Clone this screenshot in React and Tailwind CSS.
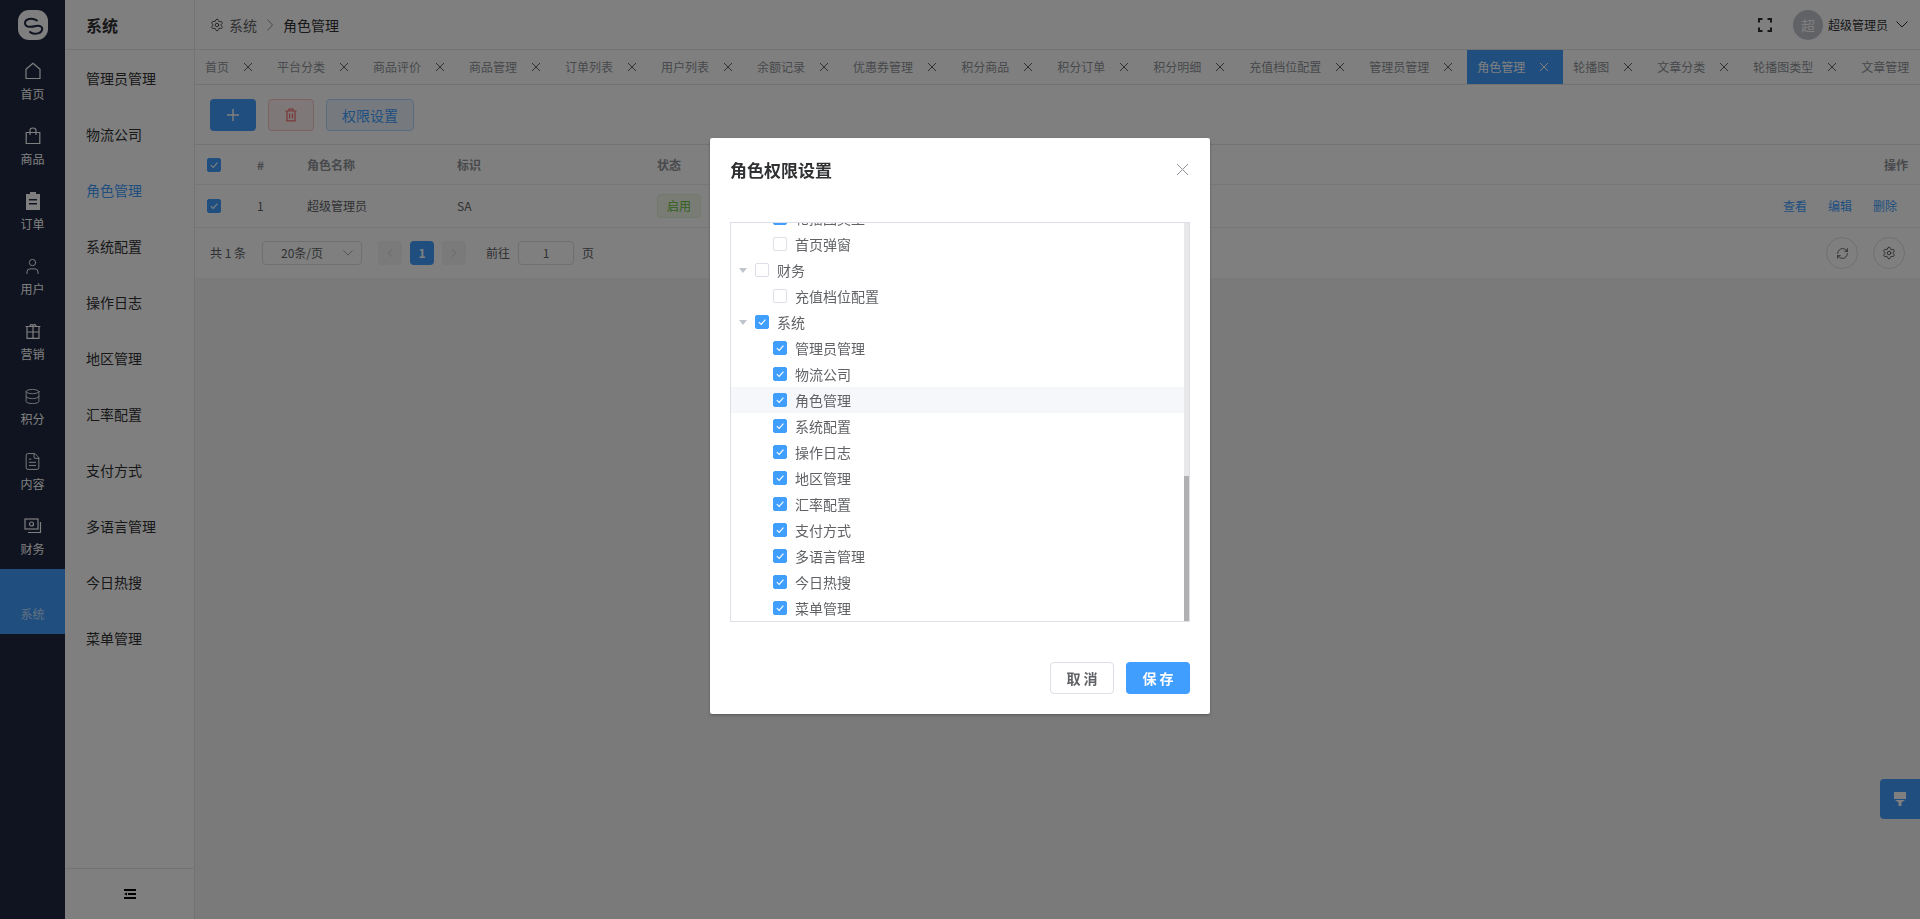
import React from 'react';
import { User, Database, FileText, Settings, ChevronRight, ChevronLeft, RefreshCw } from 'lucide-react';

const HomeIcon = () => (
  <svg width="16" height="18" viewBox="0 0 16 18" fill="none" stroke="currentColor" strokeWidth="1.2">
    <path d="M8 1.2 15 7.2V16.5H1V7.2Z" strokeLinejoin="round" />
  </svg>
);

const BagIcon = () => (
  <svg width="16" height="18" viewBox="0 0 16 18" fill="none" stroke="currentColor" strokeWidth="1.2">
    <path d="M1.2 5.5h13.6v11H1.2ZM5 8V3.4C5 1.8 6.3 1 8 1s3 .8 3 2.4V8" />
  </svg>
);

const OrderIcon = () => (
  <svg width="16" height="18" viewBox="0 0 16 18" fill="currentColor">
    <path fillRule="evenodd" d="M5 0h6v2h4v16H1V2h4ZM4 7v1.6h8V7Zm0 4v1.6h8V11Z" />
  </svg>
);

const GiftIcon = () => (
  <svg width="16" height="16" viewBox="0 0 16 16" fill="none" stroke="currentColor" strokeWidth="1.2">
    <path d="M.6 3.5h14.8M2 3.5v11.900h12V3.500M2 9h12M8 3.500v11.900M5 3.500C5 1.500 7 .8 8 2.500 9 .8 11 1.500 11 3.500" />
  </svg>
);

const MoneyIcon = () => (
  <svg width="18" height="16" viewBox="0 0 18 16" fill="none" stroke="currentColor" strokeWidth="1.2">
    <rect x="1" y="1" width="13" height="10" />
    <circle cx="7.5" cy="6" r="2" />
    <path d="M16.5 4v10.5H4" />
  </svg>
);

const CloseIcon = ({ size = 8, className = '' }) => (
  <svg width={size} height={size} viewBox="0 0 8 8" fill="none" stroke="currentColor" strokeWidth={8 / size} className={`shrink-0 ${className}`}>
    <path d="M0 0l8 8M8 0 0 8" />
  </svg>
);

const ArrowDown = ({ width = 12, className = '' }) => (
  <svg width={width} height={width / 2 + 1} viewBox="0 0 12 7" fill="none" stroke="currentColor" strokeWidth="1" className={className}>
    <path d="M.5.5 6 6 11.500.5" />
  </svg>
);

const railItems = [
  { label: '首页', icon: <HomeIcon /> },
  { label: '商品', icon: <BagIcon /> },
  { label: '订单', icon: <OrderIcon /> },
  { label: '用户', icon: <User size={19} strokeWidth={1.2} /> },
  { label: '营销', icon: <GiftIcon /> },
  { label: '积分', icon: <Database size={17} strokeWidth={1.2} /> },
  { label: '内容', icon: <FileText size={19} strokeWidth={1.2} /> },
  { label: '财务', icon: <MoneyIcon /> },
];

const subMenu = ['管理员管理', '物流公司', '角色管理', '系统配置', '操作日志', '地区管理', '汇率配置', '支付方式', '多语言管理', '今日热搜', '菜单管理'];

const tabs = ['首页', '平台分类', '商品评价', '商品管理', '订单列表', '用户列表', '余额记录', '优惠券管理', '积分商品', '积分订单', '积分明细', '充值档位配置', '管理员管理', '角色管理', '轮播图', '文章分类', '轮播图类型', '文章管理'];

const treeRows = [
  { label: '轮播图类型', checked: true },
  { label: '首页弹窗' },
  { label: '财务', parent: true },
  { label: '充值档位配置' },
  { label: '系统', parent: true, checked: true },
  { label: '管理员管理', checked: true },
  { label: '物流公司', checked: true },
  { label: '角色管理', checked: true, hover: true },
  { label: '系统配置', checked: true },
  { label: '操作日志', checked: true },
  { label: '地区管理', checked: true },
  { label: '汇率配置', checked: true },
  { label: '支付方式', checked: true },
  { label: '多语言管理', checked: true },
  { label: '今日热搜', checked: true },
  { label: '菜单管理', checked: true },
];

const Checkbox = ({ checked }) => (
  <span className={`flex h-[14px] w-[14px] shrink-0 items-center justify-center rounded-[2px] border ${checked ? 'border-[#409eff] bg-[#409eff]' : 'border-[#dcdfe6] bg-white'}`}>
    {checked && (
      <svg width="10" height="10" viewBox="0 0 10 10" fill="none" stroke="white" strokeWidth="1.1">
        <path d="M1.8 5.2 4.2 7.4 8.4 2.6" />
      </svg>
    )}
  </span>
);

const Rail = () => (
  <aside className="flex w-[65px] shrink-0 flex-col bg-[#1e2840] text-white">
    <div className="flex h-[49px] items-start justify-center pt-[10px]">
      <div className="flex h-[30px] w-[30px] items-center justify-center rounded-[11px] bg-white">
        <svg width="30" height="30" viewBox="0 0 30 30" fill="none" stroke="#1e2840" strokeWidth="2" strokeLinecap="round">
          <path d="M19 10.500C14 7 7 9 7 13c0 5 7 4 11 3 4-1 7 1 6 4-1 4-9 5-12 2" />
        </svg>
      </div>
    </div>
    {railItems.map((item) => (
      <div key={item.label} className="flex h-[65px] flex-col items-center">
        <div className="mt-[13px] flex h-[18px] items-center justify-center">{item.icon}</div>
        <span className="mt-[5px] text-xs leading-[18px]">{item.label}</span>
      </div>
    ))}
    <div className="flex h-[65px] flex-col items-center bg-[#409eff]">
      <span className="mt-[36px] text-xs leading-[18px] text-white/70">系统</span>
    </div>
  </aside>
);

const SubMenu = () => (
  <aside className="flex w-[130px] shrink-0 flex-col border-r border-[#e6e6e6] bg-white">
    <div className="flex h-[50px] items-center border-b border-[#e6e6e6] pl-[21px] text-base font-bold text-[#303133]">系统</div>
    <div className="flex-1">
      {subMenu.map((name) => (
        <div key={name} className={`flex h-14 items-center pl-[21px] text-sm ${name === '角色管理' ? 'text-[#409eff]' : 'text-[#303133]'}`}>
          {name}
        </div>
      ))}
    </div>
    <div className="flex h-[51px] items-center justify-center border-t border-[#e6e6e6]">
      <svg width="12" height="10" viewBox="0 0 12 10" fill="#000">
        <path d="M0 0h12v2H0ZM4 4h8v2H4ZM0 8h12v2H0ZM0 5l3-1.500v3Z" />
      </svg>
    </div>
  </aside>
);

const TopBar = () => (
  <div className="flex h-[50px] shrink-0 items-center border-b border-[#e6e6e6] bg-white pl-[15px] pr-3">
    <Settings size={14} strokeWidth={1.4} className="text-[#303133]" />
    <span className="ml-[5px] text-sm text-[#606266]">系统</span>
    <svg width="6" height="12" viewBox="0 0 6 12" fill="none" stroke="#909399" strokeWidth="1" className="mx-[10px]">
      <path d="M.5.5 5.500 6 .5 11.500" />
    </svg>
    <span className="text-sm text-[#303133]">角色管理</span>
    <div className="ml-auto flex items-center">
      <svg width="14" height="14" viewBox="0 0 14 14" fill="none" stroke="#303133" strokeWidth="2">
        <path d="M1 4.500V1h3.500M9.500 1H13v3.500M13 9.500V13H9.500M4.500 13H1V9.500" />
      </svg>
      <div className="ml-[21px] flex h-[30px] w-[30px] items-center justify-center rounded-full bg-[#c0c4cc] text-sm text-white">超</div>
      <span className="ml-[5px] text-xs text-[#303133]">超级管理员</span>
      <ArrowDown className="ml-2 text-[#303133]" />
    </div>
  </div>
);

const TabBar = () => (
  <div className="flex h-[35px] shrink-0 overflow-hidden border-b border-[#e6e6e6] bg-white">
    {tabs.map((tab) => {
      const active = tab === '角色管理';
      return (
        <div key={tab} className={`flex shrink-0 items-center pl-[10px] pr-[15px] text-xs ${active ? 'bg-[#409eff] text-white' : 'text-[#909399]'}`}>
          <span>{tab}</span>
          <CloseIcon className={`ml-[15px] ${active ? 'text-white' : 'text-[#606266]'}`} />
        </div>
      );
    })}
  </div>
);

const Toolbar = () => (
  <div className="flex h-[60px] shrink-0 items-start gap-3 border-b border-[#e6e6e6] bg-white pl-[15px] pt-[14px]">
    <button className="flex h-8 w-[46px] items-center justify-center rounded bg-[#409eff] text-white">
      <svg width="14" height="14" viewBox="0 0 14 14" stroke="currentColor" strokeWidth="1.4">
        <path d="M7 1v12M1 7h12" />
      </svg>
    </button>
    <button className="flex h-8 w-[46px] items-center justify-center rounded border border-[#fbc4c4] bg-[#fef0f0] text-[#f56c6c]">
      <svg width="14" height="14" viewBox="0 0 14 14" fill="none" stroke="currentColor" strokeWidth="1.2">
        <path d="M1.500 3h11M5 3V1.200h4V3M3 3v9.800h8V3M5.600 5.500v5M8.400 5.500v5" />
      </svg>
    </button>
    <button className="flex h-8 w-[88px] items-center justify-center rounded border border-[#b3d8ff] bg-[#ecf5ff] text-sm text-[#409eff]">权限设置</button>
  </div>
);

const RoleTable = () => (
  <div className="shrink-0 bg-white text-xs">
    <div className="flex h-10 items-center border-b border-[#ebeef5] pl-3 pr-3 font-bold text-[#909399]">
      <div className="w-[50px]"><Checkbox checked /></div>
      <div className="w-[50px]">#</div>
      <div className="w-[150px]">角色名称</div>
      <div className="w-[200px]">标识</div>
      <div>状态</div>
      <div className="ml-auto">操作</div>
    </div>
    <div className="flex h-[43px] items-center border-b border-[#ebeef5] pl-3 pr-[23px] text-[#606266]">
      <div className="w-[50px]"><Checkbox checked /></div>
      <div className="w-[50px]">1</div>
      <div className="w-[150px]">超级管理员</div>
      <div className="w-[200px]">SA</div>
      <div className="flex h-6 w-[44px] items-center justify-center rounded border border-[#e1f3d8] bg-[#f0f9eb] text-[#67c23a]">启用</div>
      <div className="ml-auto flex gap-[21px] text-[#409eff]">
        <span>查看</span>
        <span>编辑</span>
        <span>删除</span>
      </div>
    </div>
  </div>
);

const Pagination = () => (
  <div className="flex h-[50px] shrink-0 items-center bg-white pl-[15px] pr-[15px] text-xs text-[#606266]">
    <span>共 1 条</span>
    <div className="ml-4 flex h-6 w-[100px] items-center justify-between rounded border border-[#dcdfe6] pl-[18px] pr-2">
      <span>20条/页</span>
      <ArrowDown width={10} className="text-[#909399]" />
    </div>
    <div className="ml-4 flex h-6 w-6 items-center justify-center rounded-sm bg-[#f4f4f5] text-[#c0c4cc]">
      <ChevronLeft size={14} strokeWidth={1.4} />
    </div>
    <div className="ml-2 flex h-6 w-6 items-center justify-center rounded-sm bg-[#409eff] font-bold text-white">1</div>
    <div className="ml-2 flex h-6 w-6 items-center justify-center rounded-sm bg-[#f4f4f5] text-[#c0c4cc]">
      <ChevronRight size={14} strokeWidth={1.4} />
    </div>
    <span className="ml-5">前往</span>
    <div className="ml-2 flex h-6 w-14 items-center justify-center rounded border border-[#dcdfe6]">1</div>
    <span className="ml-2">页</span>
    <div className="ml-auto flex gap-[15px] text-[#303133]">
      <div className="flex h-8 w-8 items-center justify-center rounded-full border border-[#dcdfe6]">
        <RefreshCw size={13} strokeWidth={1.3} />
      </div>
      <div className="flex h-8 w-8 items-center justify-center rounded-full border border-[#dcdfe6]">
        <Settings size={14} strokeWidth={1.3} />
      </div>
    </div>
  </div>
);

const TreeRow = ({ row }) => (
  <div className={`flex h-[26px] shrink-0 items-center text-sm text-[#606266] ${row.hover ? 'bg-[#f5f7fa]' : ''} ${row.parent ? '' : 'pl-[18px]'}`}>
    <span className="flex w-6 shrink-0 justify-center">
      {row.parent && (
        <svg width="8" height="5" viewBox="0 0 8 5" fill="#c0c4cc">
          <path d="M0 0h8L4 5Z" />
        </svg>
      )}
    </span>
    <Checkbox checked={row.checked} />
    <span className="ml-2">{row.label}</span>
  </div>
);

const PermissionDialog = () => (
  <div className="fixed inset-0 bg-black/50">
    <div className="mx-auto mt-[138px] w-[500px] rounded-[2px] bg-white shadow-[0_1px_3px_rgba(0,0,0,0.3)]">
      <div className="flex h-[84px] items-start justify-between pl-5 pr-[22px] pt-[19px]">
        <span className="text-[17px] font-bold leading-[26px] text-[#303133]">角色权限设置</span>
        <CloseIcon size={11} className="mt-[7px] text-[#909399]" />
      </div>
      <div className="mx-5 flex h-[400px] border border-[#dcdfe6]">
        <div className="flex min-w-0 flex-1 flex-col justify-end overflow-hidden">
          {treeRows.map((row) => (
            <TreeRow key={row.label + (row.parent ? '-p' : '')} row={row} />
          ))}
        </div>
        <div className="flex w-[5px] shrink-0 flex-col justify-end bg-[#e8e8e8]">
          <div className="h-[145px] bg-[#b0b0b0]" />
        </div>
      </div>
      <div className="flex justify-end gap-3 px-5 pb-5 pt-10">
        <button className="h-8 w-16 rounded border border-[#dcdfe6] bg-white text-sm font-bold text-[#606266]">取 消</button>
        <button className="h-8 w-16 rounded bg-[#409eff] text-sm font-bold text-white">保 存</button>
      </div>
    </div>
  </div>
);

export default function App() {
  return (
    <div className="relative flex h-screen w-full overflow-hidden bg-[#f5f5f5] font-['Noto_Sans_CJK_SC','Noto_Sans',sans-serif]">
      <Rail />
      <SubMenu />
      <main className="flex min-w-0 flex-1 flex-col">
        <TopBar />
        <TabBar />
        <Toolbar />
        <RoleTable />
        <Pagination />
      </main>
      <div className="absolute right-0 top-[779px] flex h-10 w-10 items-center justify-center rounded-l bg-[#409eff]">
        <svg width="12" height="14" viewBox="0 0 12 14" fill="white">
          <path d="M0 0h12v7H0ZM1 8h10L7.500 10.500V14h-3v-3.500Z" />
        </svg>
      </div>
      <PermissionDialog />
    </div>
  );
}
